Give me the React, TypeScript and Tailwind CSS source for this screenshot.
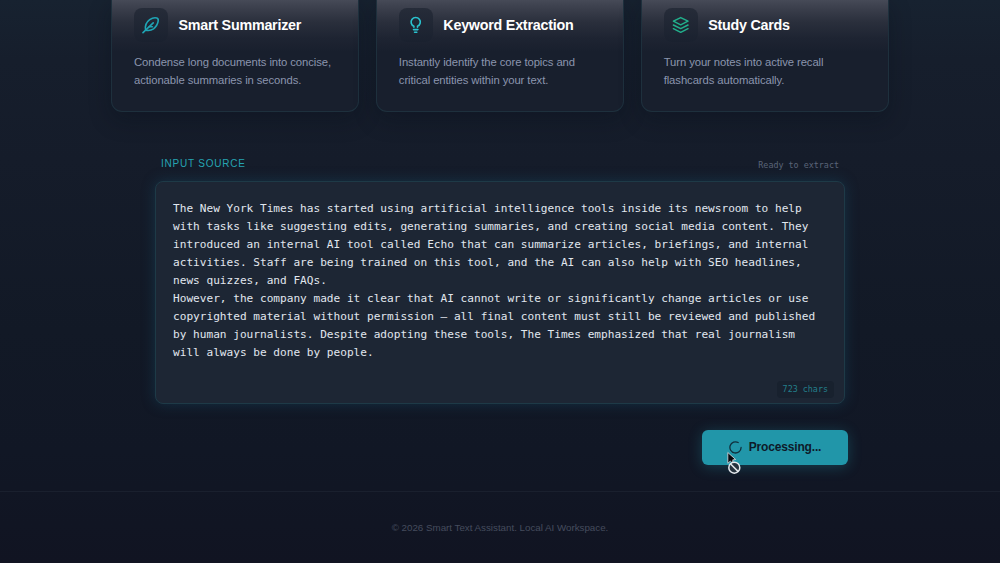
import React, { useState } from 'react'

interface Feature {
  title: string
  lines: string[]
  icon: React.FC
  iconClass: string
}

const QuillIcon: React.FC = () => (
  <svg
    width="18"
    height="18"
    viewBox="0.3 0 18 18"
    fill="none"
    stroke="currentColor"
    strokeWidth="1.6"
    strokeLinecap="round"
    strokeLinejoin="round"
  >
    <path d="M1.300 16.700L11.500 6.900" />
    <path d="M3.900 14.100C3 9.600 4.600 6.200 8 3.700c2.400-1.700 5.200-2.200 7.100-1.700 1.200.3 1.600 1.400 1.400 2.900-.4 3-2 5.800-4.700 7.900-2.200 1.600-4.900 2-7.900 1.300z" />
    <path d="M7.500 10.700h3.200" />
  </svg>
)

const BulbIcon: React.FC = () => (
  <svg
    width="18"
    height="18"
    viewBox="0.3 0 18 18"
    fill="none"
    stroke="currentColor"
    strokeWidth="1.6"
    strokeLinecap="round"
    strokeLinejoin="round"
  >
    <path d="M7.200 11.200v-.9A4.600 4.600 0 1 1 10.800 10.300v.9" />
    <path d="M6.800 13.600h4.400M7.900 16.200h2.200" />
  </svg>
)

const StackIcon: React.FC = () => (
  <svg
    width="18"
    height="18"
    viewBox="0.3 0 18 18"
    fill="none"
    stroke="currentColor"
    strokeWidth="1.5"
    strokeLinecap="round"
    strokeLinejoin="round"
  >
    <path d="M9 1.600l7.300 3.600L9 8.800 1.700 5.200z" />
    <path d="M1.700 9L9 12.600 16.300 9M1.700 12.700L9 16.300l7.300-3.600" />
  </svg>
)

const features: Feature[] = [
  {
    title: 'Smart Summarizer',
    lines: ['Condense long documents into concise,', 'actionable summaries in seconds.'],
    icon: QuillIcon,
    iconClass: 'text-[#1fa5b5]',
  },
  {
    title: 'Keyword Extraction',
    lines: ['Instantly identify the core topics and', 'critical entities within your text.'],
    icon: BulbIcon,
    iconClass: 'text-[#2ac3d0]',
  },
  {
    title: 'Study Cards',
    lines: ['Turn your notes into active recall', 'flashcards automatically.'],
    icon: StackIcon,
    iconClass: 'text-[#22b08c]',
  },
]

const initialText = `The New York Times has started using artificial intelligence tools inside its newsroom to help with tasks like suggesting edits, generating summaries, and creating social media content. They introduced an internal AI tool called Echo that can summarize articles, briefings, and internal activities. Staff are being trained on this tool, and the AI can also help with SEO headlines, news quizzes, and FAQs.
However, the company made it clear that AI cannot write or significantly change articles or use copyrighted material without permission — all final content must still be reviewed and published by human journalists. Despite adopting these tools, The Times emphasized that real journalism will always be done by people.`

const FeatureCard: React.FC<{ feature: Feature }> = ({ feature }) => {
  const Icon = feature.icon
  return (
    <div className="h-[112px] rounded-b-[11px] border border-t-0 border-[#1e303d] bg-[#181f2d] bg-[linear-gradient(180deg,#464a57_0px,#3b3f4c_8px,#2a2f3c_22px,#1e2432_38px,#181f2d_52px)] px-[22px] pt-[8px] shadow-[0_8px_22px_rgba(8,14,24,0.3)]">
      <div className="flex items-center gap-[10.5px]">
        <div className="flex h-[34px] w-[34px] items-center justify-center rounded-lg bg-[linear-gradient(180deg,#262c39,#1a212f)]">
          <span className={feature.iconClass}>
            <Icon />
          </span>
        </div>
        <h3 className="text-[14.3px] leading-5 font-bold tracking-[-0.23px] whitespace-nowrap text-white">
          {feature.title}
        </h3>
      </div>
      <p className="mt-[11px] text-[11.3px] leading-[18px] tracking-[-0.09px] whitespace-nowrap text-[#8b95ae]">
        {feature.lines[0]}
        <br />
        {feature.lines[1]}
      </p>
    </div>
  )
}

const BlockedCursor: React.FC = () => (
  <svg
    className="pointer-events-none absolute top-[21px] left-[24px]"
    width="18"
    height="26"
    viewBox="0 0 18 26"
    fill="none"
  >
    <path
      d="M1.800 1.500v10.800l2.500-2.100 1.200 1 1.700-.8-.5-1.500 3-.4z"
      fill="#06080c"
      stroke="#c9d3d8"
      strokeWidth="0.9"
      strokeLinejoin="round"
    />
    <circle cx="8.300" cy="16.700" r="5.500" fill="#26333e" stroke="#e4e8ec" strokeWidth="1.500" />
    <path d="M4.400 12.800l7.800 7.800" stroke="#e4e8ec" strokeWidth="1.500" />
  </svg>
)

const App: React.FC = () => {
  const [text, setText] = useState(initialText)

  return (
    <div className="flex h-[563px] w-full flex-col overflow-hidden bg-[#111625] bg-[linear-gradient(180deg,#172230_0px,#161e2c_60px,#151c2a_160px,#121926_330px,#111725_450px,#111422_563px)] font-['Liberation_Sans',Arial,sans-serif]">
      {/* Features */}
      <section className="mx-auto grid w-[778px] grid-cols-3 gap-[16.5px]">
        {features.map((feature) => (
          <FeatureCard key={feature.title} feature={feature} />
        ))}
      </section>

      {/* Input */}
      <main className="mx-auto mt-[44px] w-[690px]">
        <div className="flex h-[16px] items-center justify-between px-[6px]">
          <label
            htmlFor="source"
            className="text-[10px] leading-[14px] tracking-[0.78px] text-[#25a4b3] uppercase"
          >
            Input Source
          </label>
          <span className="pt-[2px] font-['DejaVu_Sans_Mono',monospace] text-[8.4px] leading-[12px] text-[#5a6478]">
            Ready to extract
          </span>
        </div>
        <div className="relative mt-[9px]">
          <textarea
            id="source"
            value={text}
            onChange={(e) => setText(e.target.value)}
            spellCheck={false}
            className="block h-[223px] w-full resize-none overflow-hidden rounded-lg border border-[#1e3a47] bg-[#1d2634] pt-[18px] pr-[20px] pl-[17px] font-['DejaVu_Sans_Mono',monospace] text-[11.11px] leading-[18.05px] text-[#e1e7ef] shadow-[0_0_14px_rgba(24,80,110,0.42)] outline-none"
          />
          <span className="absolute right-[11.5px] bottom-[6px] rounded-[4px] bg-[#18212e] px-[5.5px] py-[2px] font-['DejaVu_Sans_Mono',monospace] text-[8.4px] leading-[13px] text-[#237f8b]">
            723 chars
          </span>
        </div>
        <div className="mt-[26px] -mr-[3px] flex justify-end">
          <div className="relative">
            <button
              disabled
              className="flex h-[35px] w-[146px] items-center justify-center gap-[7px] rounded-[6px] bg-[#2196a9] pb-px text-[12px] font-bold tracking-[-0.17px] text-[#0e1a2a] shadow-[0_2px_14px_rgba(33,150,169,0.33)]"
            >
              <svg width="13" height="13" viewBox="0 0 13 13" fill="none">
                <path
                  d="M9.2 1.5A5.6 5.6 0 1 0 12.1 6.5"
                  stroke="#10303d"
                  strokeWidth="1.3"
                  strokeLinecap="round"
                />
              </svg>
              Processing...
            </button>
            <BlockedCursor />
          </div>
        </div>
      </main>

      {/* Footer */}
      <footer className="mt-[26px] flex-1 border-t border-[#1a202e] pt-[29px] text-center text-[9.8px] leading-[14px] tracking-[-0.02px] text-[#454c5d]">
        © 2026 Smart Text Assistant. Local AI Workspace.
      </footer>
    </div>
  )
}

export default App
